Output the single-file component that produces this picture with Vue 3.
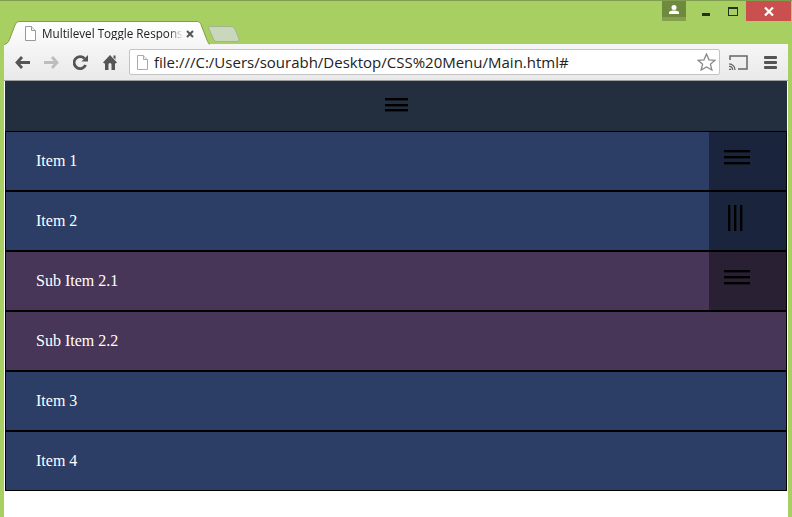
<script setup>
const rows = [
  { label: 'Item 1', sub: false, toggle: 'h' },
  { label: 'Item 2', sub: false, toggle: 'v' },
  { label: 'Sub Item 2.1', sub: true, toggle: 'h' },
  { label: 'Sub Item 2.2', sub: true, toggle: null },
  { label: 'Item 3', sub: false, toggle: null },
  { label: 'Item 4', sub: false, toggle: null },
]
</script>

<template>
  <div class="window">
    <div class="titlebar">
      <div class="tabs">
        <div class="tab">
          <svg class="tab-shape" width="206" height="24" viewBox="0 0 206 24">
            <defs>
              <linearGradient id="tabfill" x1="0" y1="0" x2="0" y2="1">
                <stop offset="0" stop-color="#ffffff"/>
                <stop offset="1" stop-color="#f6f6f6"/>
              </linearGradient>
            </defs>
            <path d="M0 24C3 23 4.500 21 5.500 18.500L11 4C12 1.500 13.500 .5 16 .5H193C195 .5 196 1.500 197 3.500L203 19C204 21.500 205 23 206 24Z" fill="url(#tabfill)"/>
            <path d="M0 23.500C3 23 4.500 21 5.500 18.500L11 4C12 1.500 13.500 .5 16 .5H193C195 .5 196 1.500 197 3.500L203 19C204 21.500 205 23 206 23.500" fill="none" stroke="#7f9d4c"/>
          </svg>
          <svg class="page" width="11" height="15" viewBox="0 0 11 15">
            <path d="M.5 .5H6.500L10.500 4.500V14.500H.5Z" fill="#fff" stroke="#999"/>
            <path d="M6.500 .5V4.500H10.500" fill="#eee" stroke="#999"/>
          </svg>
          <span class="tab-title">Multilevel Toggle Respons</span>
          <svg class="tab-close" width="8" height="8" viewBox="0 0 8 8">
            <path d="M1 1L7 7M7 1L1 7" stroke="#555" stroke-width="2"/>
          </svg>
        </div>
        <svg class="newtab" width="32" height="16" viewBox="0 0 32 16">
          <path d="M1.500 .5H23C25 .5 26 1.500 27 3L31 13C31.500 14.500 31 15.500 29 15.500H9C7 15.500 6 14.500 5.500 13L1 3C.5 1.500 .5 .5 1.500 .5Z" fill="#c9d8bd" stroke="#a1b58c"/>
        </svg>
      </div>
      <div class="controls">
        <div class="profile">
          <svg width="10" height="9" viewBox="0 0 10 9">
            <circle cx="5" cy="2.500" r="2.500" fill="#fff"/>
            <path d="M0 9V7.500C0 6 3 5.500 5 5.500S10 6 10 7.500V9Z" fill="#fff"/>
          </svg>
        </div>
        <div class="min"></div>
        <div class="max"></div>
        <div class="close">
          <svg width="10" height="9" viewBox="0 0 10 9">
            <path d="M1 .5L9 8.500M9 .5L1 8.500" stroke="#fff" stroke-width="2.200"/>
          </svg>
        </div>
      </div>
    </div>

    <div class="chrome">
      <div class="toolbar">
        <svg class="tool back" width="15" height="13" viewBox="0 0 15 13">
          <path d="M7 1L2 6.500L7 12M2.500 6.500H15" fill="none" stroke="#555" stroke-width="2.800"/>
        </svg>
        <svg class="tool fwd" width="15" height="13" viewBox="0 0 15 13">
          <path d="M8 1L13 6.500L8 12M12.500 6.500H0" fill="none" stroke="#bdbdbd" stroke-width="2.800"/>
        </svg>
        <svg class="tool reload" width="15" height="15" viewBox="0 0 15 15">
          <path d="M12.600 10A6 6 0 1 1 11.500 3.500" fill="none" stroke="#555" stroke-width="2.800"/>
          <path d="M8.500 6.500H15V0Z" fill="#555"/>
        </svg>
        <svg class="tool home" width="14" height="15" viewBox="0 0 14 15">
          <path d="M7 0L0 7.500L1.500 8.500H2V15H5.500V9.500Q5.500 8 7 8T8.500 9.500V15H12V8.500H12.500L14 7.500Z" fill="#555"/>
          <path d="M10.500 .5H12.500V4.500L10.500 2.800Z" fill="#555"/>
        </svg>
        <div class="omnibox">
          <svg class="omni-page" width="11" height="15" viewBox="0 0 11 15">
            <path d="M.5 .5H6.500L10.500 4.500V14.500H.5Z" fill="#fff" stroke="#aaa"/>
            <path d="M6.500 .5V4.500H10.500" fill="#eee" stroke="#aaa"/>
          </svg>
          <span class="url">file:///C:/Users/sourabh/Desktop/CSS%20Menu/Main.html#</span>
          <svg class="star" width="19" height="18" viewBox="0 0 19 18">
            <path d="M9.500 1L12 6.800L18 7.300L13.400 11.200L14.900 17L9.500 13.900L4.100 17L5.600 11.200L1 7.300L7 6.800Z" fill="#fff" stroke="#8a8a8a" stroke-width="1.300"/>
          </svg>
        </div>
        <svg class="cast" width="19" height="15" viewBox="0 0 19 15">
          <path d="M1 5V1H18V14H9" fill="none" stroke="#666" stroke-width="1.500"/>
          <path d="M0 14.500H2M0 11.500A3 3 0 0 1 3.500 15M0 8.800A6 6 0 0 1 6 15" fill="none" stroke="#666" stroke-width="1.300"/>
        </svg>
        <div class="menu"><i></i><i></i><i></i></div>
      </div>

      <div class="page-body">
        <div class="topnav">
          <div class="bars"><i></i><i></i><i></i></div>
        </div>
        <ul class="list">
          <li v-for="row in rows" :key="row.label" class="row" :class="{ sub: row.sub }">
            <span class="label">{{ row.label }}</span>
            <div v-if="row.toggle" class="toggle" :class="row.toggle === 'v' ? 'open' : ''">
              <div v-if="row.toggle === 'h'" class="bars small"><i></i><i></i><i></i></div>
              <div v-else class="vbars"><i></i><i></i><i></i></div>
            </div>
          </li>
        </ul>
      </div>
    </div>
  </div>
</template>

<style>
html, body { margin: 0; background: #a8cf61; overflow: hidden; }
</style>

<style scoped>
.window {
  width: 792px;
  height: 517px;
  background: #a8cf61;
  border-top: 1px solid #7f9d4c;
  box-sizing: border-box;
  overflow: hidden;
}
.titlebar { height: 43px; display: flex; justify-content: space-between; position: relative; z-index: 1; }
.tabs { display: flex; align-items: flex-start; padding: 20px 0 0 4px; }
.tab {
  position: relative;
  width: 206px;
  height: 23px;
  flex: none;
}
.tab-shape { position: absolute; left: 0; top: 0; }
.page { position: absolute; left: 21px; top: 5px; }
.tab-title {
  position: absolute;
  left: 38px;
  top: 5px;
  white-space: nowrap;
  font: 11.700px/14px "Open Sans", "Liberation Sans", sans-serif;
  color: #222;
  -webkit-mask-image: linear-gradient(90deg, #000 90%, transparent);
  mask-image: linear-gradient(90deg, #000 90%, transparent);
}
.tab-close { position: absolute; left: 182px; top: 9px; }
.newtab { margin: 5px 0 0 -2px; flex: none; }
.controls { display: flex; align-items: flex-start; padding-right: 1px; }
.profile {
  width: 24px;
  height: 20px;
  background: #6f8a3e;
  border-bottom: 4px solid #84a04d;
  box-sizing: border-box;
  display: flex;
  align-items: center;
  justify-content: center;
}
.min { width: 8px; height: 3px; background: #26301a; margin: 12px 18px 0 16px; }
.max { width: 8px; height: 6px; border: 1px solid #26301a; border-top-width: 2px; margin: 6px 8px 0 0; box-sizing: content-box; }
.close {
  width: 45px;
  height: 20px;
  background: #c9504f;
  display: flex;
  align-items: center;
  justify-content: center;
}
.chrome {
  margin: 0 4px;
  height: 473px;
  background: #fff;
  border-radius: 2px 2px 0 0;
}
.toolbar {
  height: 37px;
  display: flex;
  align-items: center;
  background: linear-gradient(#f6f6f6, #e9e9e9);
  border-bottom: 1px solid #a0a0a0;
  box-sizing: border-box;
  padding-left: 11px;
}
.tool { flex: none; }
.fwd { margin-left: 14px; }
.reload { margin-left: 14px; }
.home { margin-left: 15px; }
.omnibox {
  width: 591px;
  height: 26px;
  margin-left: 12px;
  flex: none;
  box-sizing: border-box;
  background: #fff;
  border: 1px solid #c4c4c4;
  border-radius: 2px;
  display: flex;
  align-items: center;
  padding-left: 7px;
}
.omni-page { flex: none; }
.url {
  margin-left: 6px;
  font: 15px/20px "Open Sans", "Liberation Sans", sans-serif;
  color: #222;
  white-space: nowrap;
  flex: 1;
}
.star { flex: none; margin-right: 3px; }
.cast { margin-left: 9px; flex: none; }
.menu { margin-left: 16px; width: 13px; display: flex; flex-direction: column; gap: 2px; }
.menu i { display: block; height: 3px; background: #555; border-radius: 1px; }
.page-body { margin-left: 1px; width: 782px; }
.topnav {
  height: 50px;
  background: #232f3e;
  display: flex;
  justify-content: center;
  padding: 17px 0 0 1px;
  box-sizing: border-box;
}
.bars { display: flex; flex-direction: column; gap: 3.500px; width: 23px; }
.bars i { display: block; height: 2px; background: #000; box-shadow: 0 1px rgba(0, 0, 0, 0.4); }
.bars.small { width: 26px; gap: 4px; }
.vbars { display: flex; gap: 4px; height: 26px; }
.vbars i { display: block; width: 2px; background: #000; box-shadow: 1px 0 rgba(0, 0, 0, 0.4); }
.list { list-style: none; margin: 0; padding: 0; }
.row {
  height: 60px;
  box-sizing: border-box;
  border: 1px solid #000;
  background: #2c3e66;
  display: flex;
  align-items: center;
  justify-content: space-between;
  color: #fff;
  font: 16px/18px "Liberation Serif", serif;
}
.row.sub { background: #473658; }
.label { margin-left: 30px; }
.toggle {
  width: 77px;
  align-self: stretch;
  background: rgba(0, 0, 0, 0.4);
  display: flex;
  justify-content: flex-start;
  align-items: flex-start;
  padding: 18px 0 0 15px;
  box-sizing: border-box;
}
.toggle.open { padding: 13px 0 0 19px; }
</style>
